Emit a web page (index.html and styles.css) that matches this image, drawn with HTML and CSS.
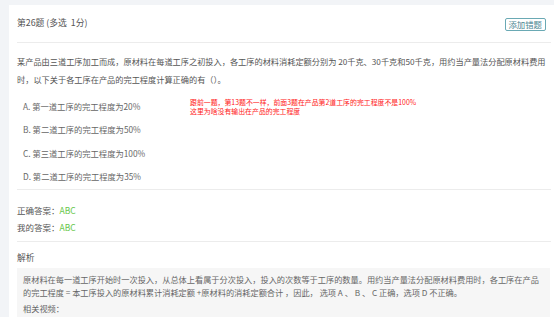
FILE: index.html
```html
<!DOCTYPE html>
<html lang="zh-CN">
<head>
<meta charset="utf-8">
<link rel="stylesheet" href="styles.css">
</head>
<body>
<div class="card">
  <div class="head">
    <div class="title">第26题 (多选&nbsp;&nbsp;1分)</div>
    <button class="btn">添加错题</button>
  </div>
  <div class="body">
    <p class="question">某产品由三道工序加工而成，原材料在每道工序之初投入，各工序的材料消耗定额分别为 20千克、30千克和50千克，用约当产量法分配原材料费用时，以下关于各工序在产品的完工程度计算正确的有（）。</p>
    <ul class="options">
      <li>A. 第一道工序的完工程度为20%</li>
      <li>B. 第二道工序的完工程度为50%</li>
      <li>C. 第三道工序的完工程度为100%</li>
      <li>D. 第二道工序的完工程度为35%</li>
    </ul>
    <div class="note">跟前一题，第13题不一样，前面3题在产品第2道工序的完工程度不是100%<br>这里为啥没有输出在产品的完工程度</div>
  </div>
  <div class="answers">
    <div class="ans">正确答案：<span class="ok">ABC</span></div>
    <div class="ans">我的答案：<span class="ok">ABC</span></div>
  </div>
  <div class="analysis">
    <div class="a-title">解析</div>
    <div class="a-box">
      <p class="a-text">原材料在每一道工序开始时一次投入，从总体上看属于分次投入，投入的次数等于工序的数量。用约当产量法分配原材料费用时，各工序在产品的完工程度 = 本工序投入的原材料累计消耗定额 +原材料的消耗定额合计 ，因此， 选项 A 、 B 、 C 正确，选项 D 不正确。</p>
      <div class="a-video">相关视频：</div>
    </div>
  </div>
</div>
</body>
</html>
```

FILE: styles.css
```css
html, body {
  margin: 0;
  padding: 0;
}
body {
  background: #f2f4f7;
  padding: 5px 0 0 9px;
  font-family: "Noto Sans CJK SC", "Noto Sans", sans-serif;
  color: #555;
  overflow: hidden;
  height: 312px;
}
.card {
  background: #fff;
  padding: 0 3px 0 8px;
  min-height: 312px;
}
.head {
  height: 38px;
  display: flex;
  align-items: center;
  justify-content: space-between;
  border-bottom: 1px solid #ececec;
  box-sizing: border-box;
}
.title {
  font-size: 8.8px;
  color: #555;
  margin-top: -2px;
}
.btn {
  font-family: inherit;
  font-size: 8.4px;
  color: #4b8591;
  background: #fff;
  border: 1px solid #6aa9b4;
  border-radius: 2px;
  height: 13px;
  padding: 0 3px;
  line-height: 11px;
  margin-right: 5px;
  margin-top: 1px;
}
.body {
  position: relative;
  border-bottom: 1px solid #ececec;
  padding: 9px 0 1px;
}
.question {
  margin: 0;
  font-size: 8.2px;
  line-height: 18px;
  color: #555;
}
.options {
  list-style: none;
  margin: 7px 0 0;
  padding: 0 0 0 6px;
}
.options li {
  font-size: 8.3px;
  line-height: 23.3px;
  height: 23.3px;
  color: #666;
}
.note {
  position: absolute;
  left: 173px;
  top: 55px;
  font-size: 6.9px;
  line-height: 8.5px;
  color: #ff2020;
  white-space: nowrap;
}
.answers {
  padding: 12px 0 5px;
  border-bottom: 1px solid #ececec;
}
.ans {
  font-size: 8.5px;
  line-height: 17px;
  color: #555;
}
.ok {
  color: #67c74a;
}
.analysis {
  padding-top: 7px;
}
.a-title {
  font-size: 8.8px;
  line-height: 17px;
  color: #555;
}
.a-box {
  margin-top: 2px;
  background: #f6f6f6;
  padding: 5px 6px 6px;
  margin-right: 1px;
}
.a-text {
  margin: 0;
  font-size: 8.2px;
  line-height: 13px;
  color: #666;
}
.a-video {
  margin-top: 3px;
  font-size: 8.2px;
  line-height: 13px;
  color: #666;
}
```
